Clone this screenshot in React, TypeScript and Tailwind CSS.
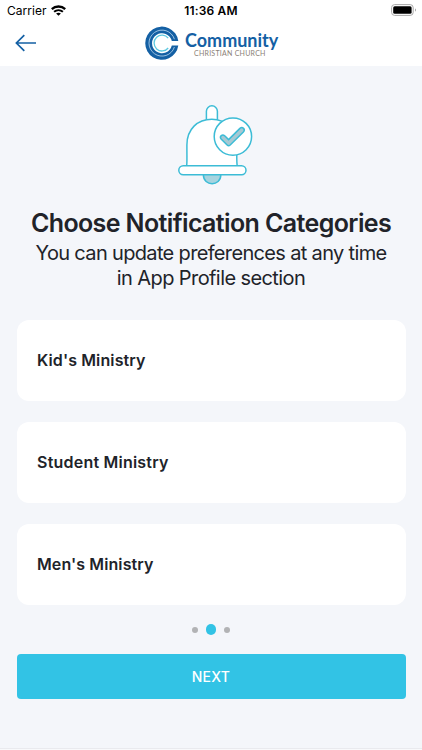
import React, { useState } from 'react';

interface CategoryCardProps {
  name: string;
  tracking: string;
}

const categories: CategoryCardProps[] = [
  { name: "Kid's Ministry", tracking: 'tracking-[0.12px]' },
  { name: 'Student Ministry', tracking: 'tracking-[0.22px]' },
  { name: "Men's Ministry", tracking: 'tracking-[0.1px]' },
];

const WifiIcon: React.FC = () => (
  <svg className="ml-[4px] h-[11px] w-[15px] -translate-y-px" viewBox="0 0 15 11" fill="none">
    <path d="M0.8 4.1C4.5 0.6 10.5 0.6 14.2 4.1" stroke="#000" strokeWidth="2.3" />
    <path d="M3.1 6.8C5.6 4.6 9.4 4.6 11.9 6.8" stroke="#000" strokeWidth="2" />
    <path d="M7.5 10.8L5.1 8.6C6.4 7.5 8.6 7.5 9.9 8.6Z" fill="#000" />
  </svg>
);

const BatteryIcon: React.FC = () => (
  <svg className="h-3 w-[26px] -translate-y-px" viewBox="0 0 26 12" fill="none">
    <rect x="0.6" y="0.6" width="21.6" height="10.8" rx="3" stroke="#a8a8a8" />
    <rect x="2.2" y="2.2" width="18.4" height="7.6" rx="1.5" fill="#000" />
    <path d="M24 4.4C25.2 4.8 25.2 7.2 24 7.6Z" fill="#999" />
  </svg>
);

const StatusBar: React.FC = () => (
  <div className="grid h-[22px] grid-cols-3 items-center text-black">
    <div className="flex items-center pl-[7px]">
      <span className="text-[12px] leading-[22px] tracking-[0.05px]">Carrier</span>
      <WifiIcon />
    </div>
    <span className="text-center text-[12px] leading-[22px] font-semibold tracking-[0.15px]">11:36 AM</span>
    <div className="flex justify-end pr-[5px]">
      <BatteryIcon />
    </div>
  </div>
);

const ChurchLogo: React.FC = () => (
  <div className="flex">
    <svg className="h-[34px] w-[34px] shrink-0" viewBox="0 0 34 34" fill="none">
      <path d="M33.3 15H26.8A10 10 0 1 0 26.8 19.4H33.3A16.6 16.6 0 1 1 33.3 15Z" fill="#1460a4" />
      <path d="M29.4 13.2A13 13 0 1 0 29.4 21" stroke="#a9cbe6" strokeWidth="0.9" />
      <path d="M23.2 12.2A7.9 7.9 0 1 0 23.2 22" stroke="#5cc8e0" strokeWidth="1.3" />
    </svg>
    <div className="flex flex-col pt-[4px] pl-[6px]">
      <span className="h-[20px] font-['Lato'] text-[18px] leading-[20px] font-bold text-[#1460a4]">Community</span>
      <span className="pl-[9px] font-['Lato'] text-[7px] leading-[7px] tracking-[0.25px] whitespace-nowrap text-[#8b7f77]">
        CHRISTIAN CHURCH
      </span>
    </div>
  </div>
);

const NavBar: React.FC = () => (
  <div className="flex h-11">
    <button className="flex w-[145px] pt-[12px] pl-[15px]" aria-label="Back">
      <svg className="h-[18px] w-[22px]" viewBox="0 0 22 18" fill="none" stroke="#1460a4" strokeWidth="1.7">
        <path d="M9.3 1.2L1.4 9L9.3 16.8M1.4 9H21" />
      </svg>
    </button>
    <div className="pt-[4px]">
      <ChurchLogo />
    </div>
  </div>
);

const BellIcon: React.FC = () => (
  <svg className="h-[82px] w-[78px]" viewBox="0 0 78 82" fill="none" stroke="#3cbcd6" strokeWidth="1.5">
    <path d="M25.4 71C25.4 82.5 42.8 82.5 42.8 71" fill="#a7d4df" />
    <rect x="28.4" y="1.8" width="11" height="22" rx="5.5" fill="#fff" />
    <path d="M8.5 62.5C9.2 60 8.9 57 8.9 41C8.9 25 19.6 15.2 33.8 15.2C48.1 15.2 58.8 26 58.8 41C58.8 57 58.5 60 59.4 62.5Z" fill="#fff" />
    <rect x="0.8" y="61.7" width="67.2" height="9" rx="4.5" fill="#fff" />
    <circle cx="54.9" cy="32.6" r="18.7" fill="#fff" />
    <path
      d="M43.1 35C41.1 32.4 44.3 29.8 46.7 31.8L50.6 35.6L61.9 24.4C64.5 22.2 67.8 25.4 65.4 28L52.2 41C51.1 42 50.1 42 49.1 41Z"
      fill="#a7c9d3"
    />
  </svg>
);

const CategoryCard: React.FC<CategoryCardProps> = ({ name, tracking }) => (
  <button className="flex h-[81px] w-full items-center rounded-[12px] bg-white pb-[2px] pl-[20.5px] text-left">
    <span className={`text-[16px] font-semibold ${tracking}`}>{name}</span>
  </button>
);

const App: React.FC = () => {
  const [step, setStep] = useState(1);

  return (
    <div className="flex h-[750px] w-[422px] flex-col overflow-hidden bg-[#f4f6fa] font-['Inter',sans-serif] text-[#212329]">
      <header className="h-[66px] shrink-0 bg-white">
        <StatusBar />
        <NavBar />
      </header>

      <main className="flex flex-1 flex-col px-[16.5px]">
        <div className="flex pt-[38px] pl-[161px]">
          <BellIcon />
        </div>

        <div className="mt-[21px] text-center whitespace-nowrap">
          <h1 className="text-[25px] leading-[32px] font-semibold tracking-[-0.61px]">Choose Notification Categories</h1>
          <p className="mt-[2px] text-[20px] leading-[24.5px] tracking-[-0.66px]">
            You can update preferences at any time
            <br />
            <span className="tracking-[-0.59px]">in App Profile section</span>
          </p>
        </div>

        <div className="mt-[30px] flex flex-col gap-[21px]">
          {categories.map(category => (
            <CategoryCard key={category.name} {...category} />
          ))}
        </div>

        <div className="mt-[19px] flex h-[11px] items-center justify-center gap-[8px]">
          {[0, 1, 2].map(index => (
            <span
              key={index}
              className={index === step ? 'size-[10.5px] rounded-full bg-[#32c3e5]' : 'size-[6px] rounded-full bg-[#b2b3b5]'}
            />
          ))}
        </div>

        <button
          className="mt-[19px] h-[45px] w-full rounded-[4px] bg-[#32c3e5] pb-px text-[14px] font-medium tracking-[0.3px] text-white"
          onClick={() => setStep((step + 1) % 3)}
        >
          NEXT
        </button>
      </main>

      <footer className="h-[2px] shrink-0 border-t border-[#e9eaee] bg-[#f8f9fb]" />
    </div>
  );
};

export default App;
